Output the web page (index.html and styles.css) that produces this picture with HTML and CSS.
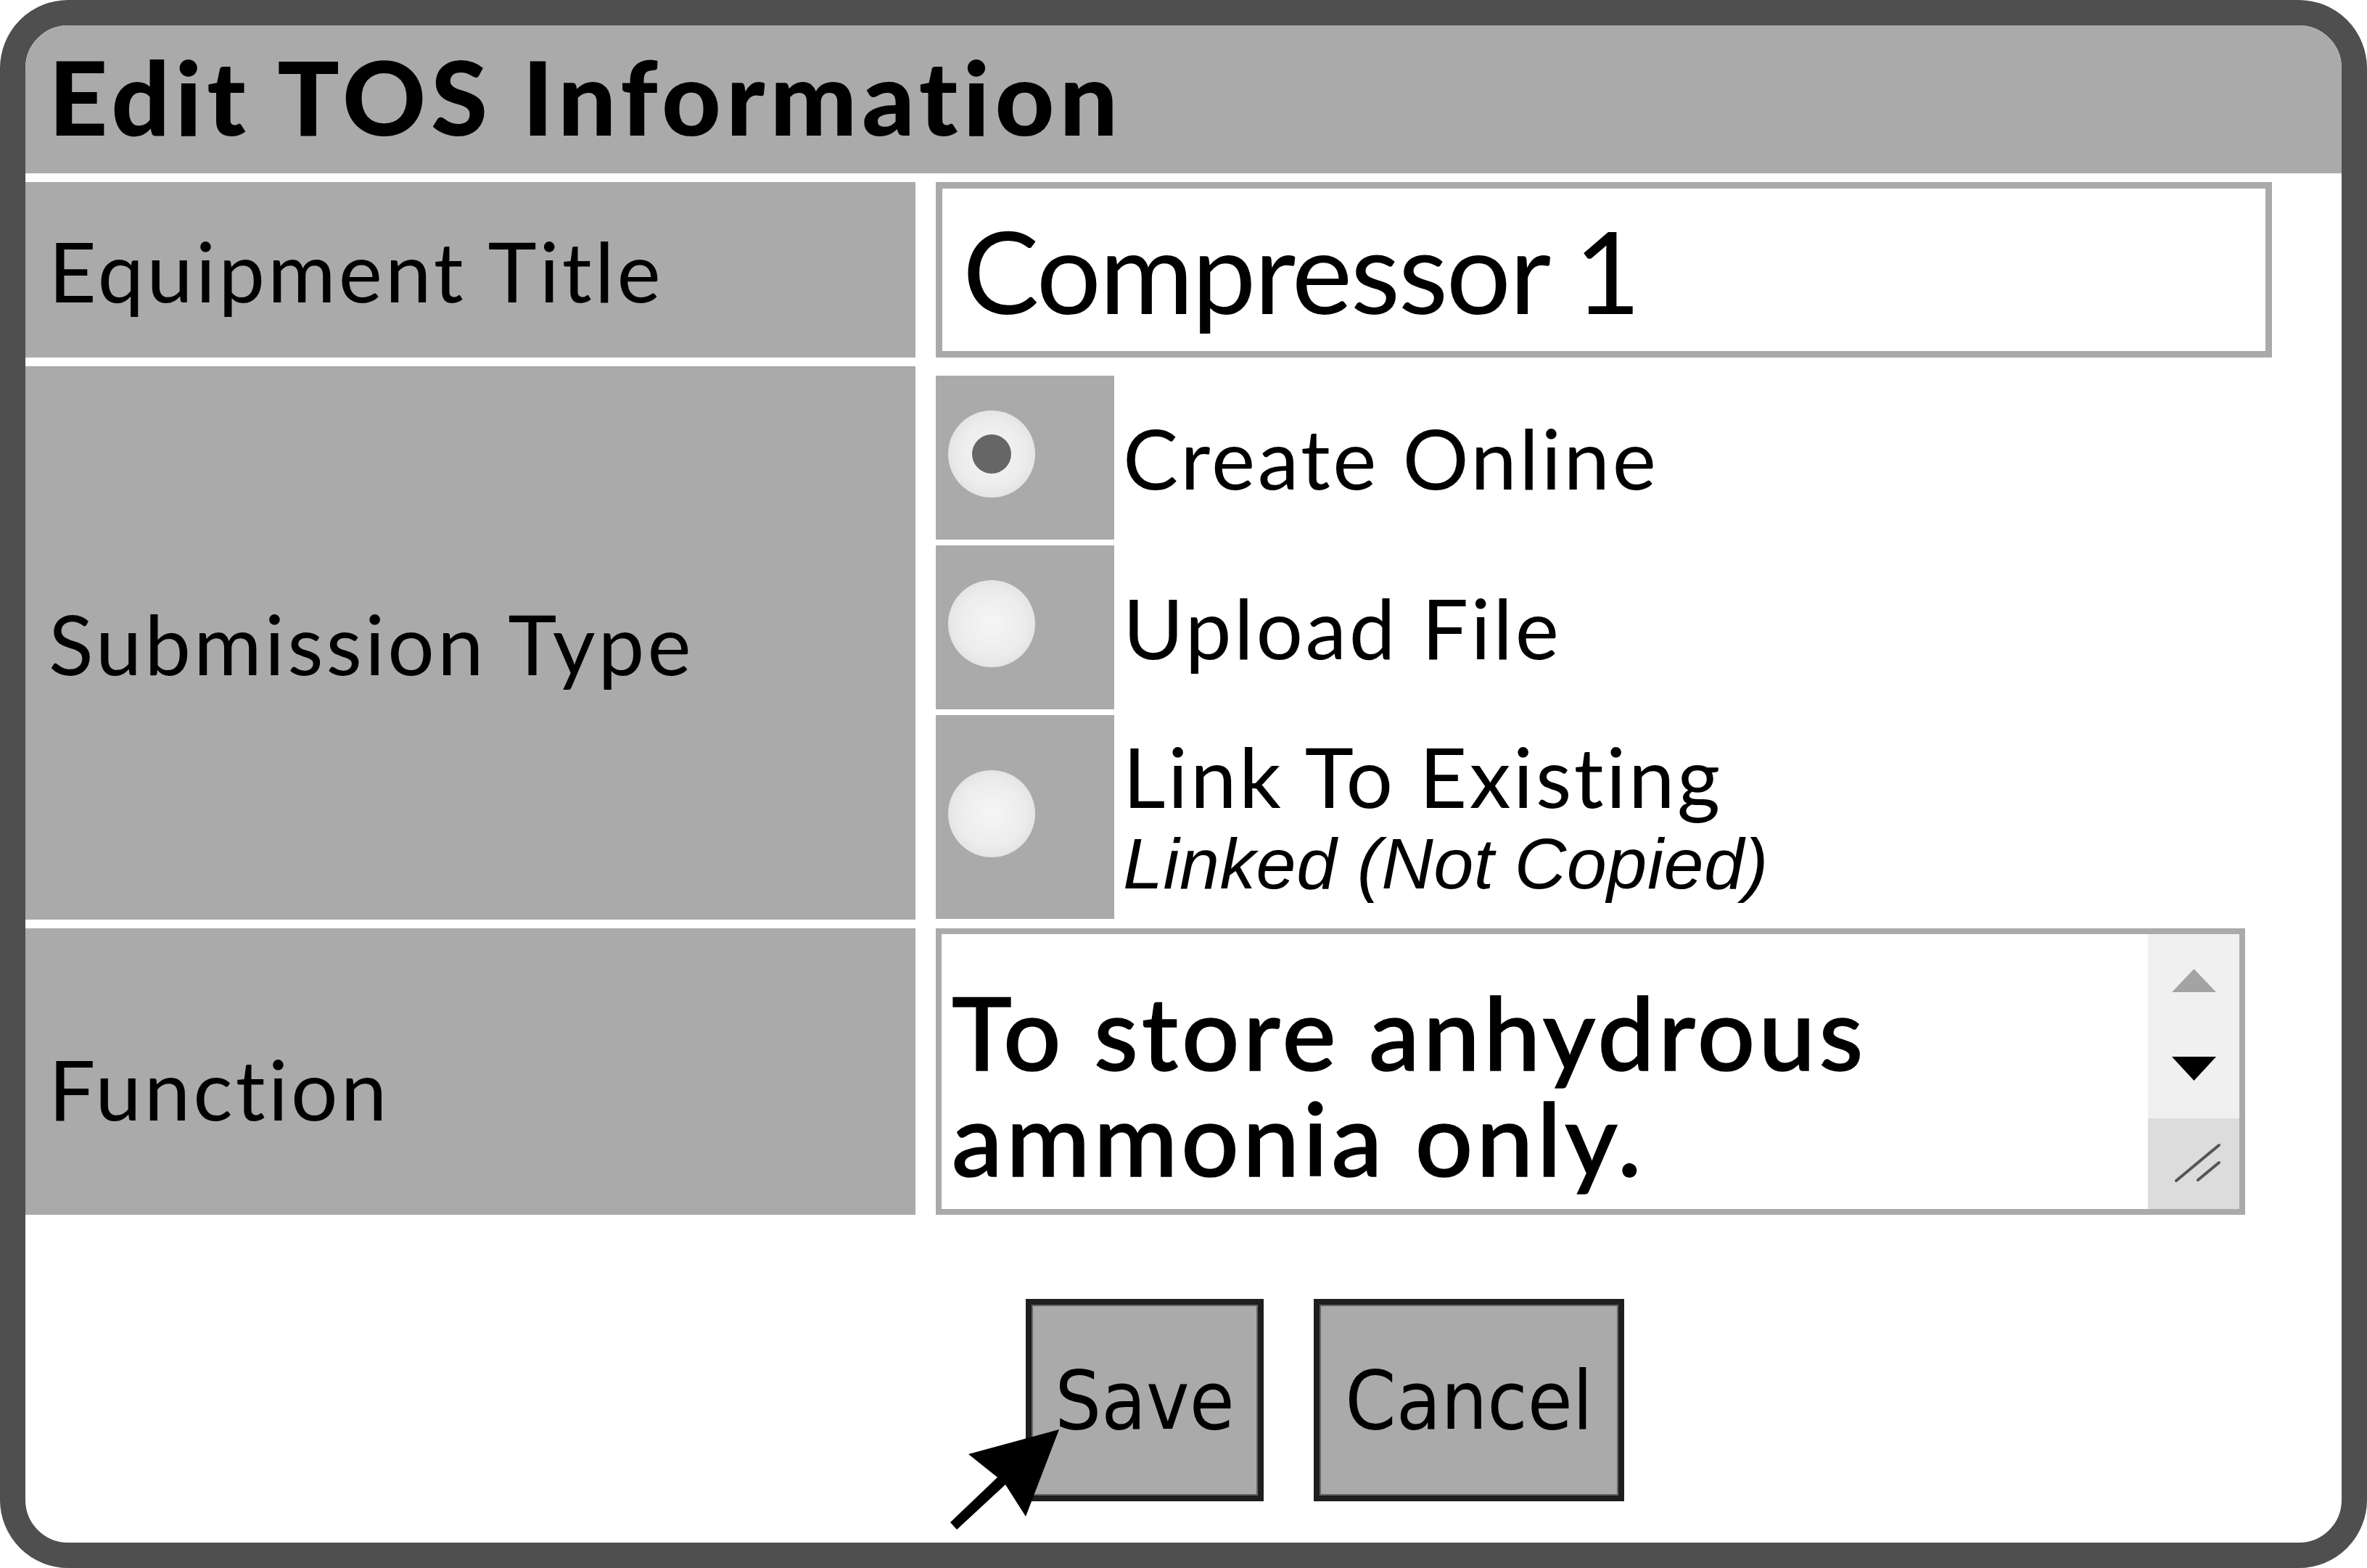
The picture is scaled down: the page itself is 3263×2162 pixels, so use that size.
FILE: index.html
```html
<!DOCTYPE html>
<html lang="en">
<head>
<meta charset="UTF-8" />
<title>Edit TOS Information</title>
<link rel="stylesheet" href="styles.css">
</head>
<body>

<div class="dialog">
  <div class="header">
    <h1>Edit TOS Information</h1>
  </div>

  <div class="form">
    <div class="label">Equipment Title</div>
    <div class="value">
      <div class="input">Compressor 1</div>
    </div>

    <div class="label">Submission Type</div>
    <div class="value options">
      <div class="option">
        <span class="radio-cell"><span class="radio checked"></span></span>
        <span class="option-text">Create Online</span>
      </div>
      <div class="option">
        <span class="radio-cell"><span class="radio"></span></span>
        <span class="option-text">Upload File</span>
      </div>
      <div class="option tall">
        <span class="radio-cell"><span class="radio"></span></span>
        <span class="option-text">Link To Existing<em>Linked (Not Copied)</em></span>
      </div>
    </div>

    <div class="label label-low">Function</div>
    <div class="value">
      <div class="textarea">
        <div class="ta-text">To store anhydrous<br>ammonia only.</div>
        <div class="ta-scroll">
          <div class="ta-track">
            <svg class="arrow-up" width="61" height="32" viewBox="0 0 61 32"><polygon points="30.5,0 61,32 0,32" fill="#a3a3a3"/></svg>
            <svg class="arrow-down" width="61" height="33" viewBox="0 0 61 33"><polygon points="0,0 61,0 30.5,33" fill="#000"/></svg>
          </div>
          <div class="ta-resize">
            <svg width="126" height="125" viewBox="0 0 126 125">
              <line x1="39" y1="86" x2="98" y2="37" stroke="#555" stroke-width="4" stroke-linecap="round"/>
              <line x1="69" y1="85" x2="98" y2="61" stroke="#555" stroke-width="4" stroke-linecap="round"/>
            </svg>
          </div>
        </div>
      </div>
    </div>
  </div>

  <div class="actions">
    <button class="btn btn-save">Save</button>
    <button class="btn btn-cancel">Cancel</button>
  </div>

  <!-- mouse pointer over the save button -->
  <svg class="pointer" width="170" height="160" viewBox="0 0 170 160">
    <polygon points="160,11 35,45 75,77 10,139 19,149 86,87 114,131" fill="#000"/>
  </svg>
</div>

</body>
</html>
```

FILE: styles.css
```css
/* --- Reset --- */
* {
  margin: 0; padding: 0; box-sizing: border-box;
}
html, body {
  width: 3263px;
  height: 2162px;
  overflow: hidden;
  background: #fff;
  font-family: Lato, 'Open Sans', sans-serif;
  font-variant-ligatures: none;
  color: #000;
}

/* --- Dialog frame --- */
.dialog {
  position: relative;
  width: 3263px;
  height: 2162px;
  border: 35px solid #4f4f4f;
  border-radius: 94px;
  background: #fff;
  overflow: hidden;
}

.header {
  height: 204px;
  background: #aaa;
  padding: 0 0 10px 32px;
}
.header h1 {
  font-size: 142px;
  font-weight: 900;
  line-height: 194px;
  letter-spacing: 7px;
}

/* --- Form grid --- */
.form {
  display: grid;
  grid-template-columns: 1227px 1842px;
  grid-template-rows: 242px 763px 395px;
  column-gap: 28px;
  row-gap: 12px;
  margin-top: 12px;
}
.label {
  background: #aaa;
  font-size: 114px;
  letter-spacing: 4px;
  display: flex;
  align-items: center;
  padding-left: 32px;
}
.label-low {
  padding-top: 46px;
}

.input {
  height: 100%;
  border: 9px solid #aaa;
  font-size: 158px;
  letter-spacing: -2.5px;
  display: flex;
  align-items: center;
  padding-left: 28px;
}

/* --- Radio options --- */
.options {
  display: flex;
  flex-direction: column;
  gap: 8px;
  padding-top: 13px;
}
.option {
  display: flex;
  align-items: center;
  height: 226px;
}
.option.tall {
  height: 281px;
  align-items: flex-start;
}
.radio-cell {
  width: 246px;
  height: 100%;
  background: #aaa;
  display: flex;
  align-items: center;
  padding: 0 0 10px 17px;
}
.radio {
  width: 120px;
  height: 120px;
  border-radius: 50%;
  background: radial-gradient(circle at 50% 50%, #f6f6f6 0%, #ececec 55%, #d6d6d6 100%);
  display: flex;
  align-items: center;
  justify-content: center;
}
.radio.checked::after {
  content: '';
  width: 54px;
  height: 54px;
  border-radius: 50%;
  background: #666;
}
.option-text {
  font-size: 114px;
  line-height: 120px;
  letter-spacing: 3.5px;
  padding-left: 12px;
  display: flex;
  flex-direction: column;
}
.option.tall .option-text {
  padding-top: 24px;
}
.option-text em {
  font-family: 'Liberation Sans', Arial, sans-serif;
  font-size: 99px;
  line-height: 122px;
  letter-spacing: 0.5px;
}

/* --- Fake textarea --- */
.textarea {
  width: 1805px;
  height: 100%;
  border: 8px solid #aaa;
  display: flex;
}
.ta-text {
  flex: 1;
  font-size: 140px;
  font-weight: 500;
  line-height: 146px;
  letter-spacing: 5px;
  -webkit-text-stroke: 1.5px #000;
  padding: 61px 0 0 14px;
}
.ta-scroll {
  width: 126px;
  display: flex;
  flex-direction: column;
}
.ta-track {
  flex: 1;
  background: #f0f0f0;
}
.arrow-up {
  display: block;
  margin: 48px 0 0 33px;
}
.arrow-down {
  display: block;
  margin: 89px 0 0 33px;
}
.ta-resize {
  height: 125px;
  background: #dcdcdc;
}
.ta-resize svg {
  display: block;
}

/* --- Buttons --- */
.actions {
  display: flex;
  gap: 69px;
  margin-top: 116px;
  padding-left: 1379px;
}
.btn {
  height: 279px;
  border: 8px solid #1e1e1e;
  box-shadow: inset 0 0 0 2px #666;
  background: #aaa;
  color: #000;
  font-family: 'DejaVu Sans Condensed', 'DejaVu Sans', sans-serif;
  font-size: 112px;
  padding: 0;
}
.btn-save { width: 328px; }
.btn-cancel { width: 428px; }

/* --- Pointer overlay --- */
.pointer {
  position: absolute;
  left: 1265px;
  top: 1925px;
}
```
